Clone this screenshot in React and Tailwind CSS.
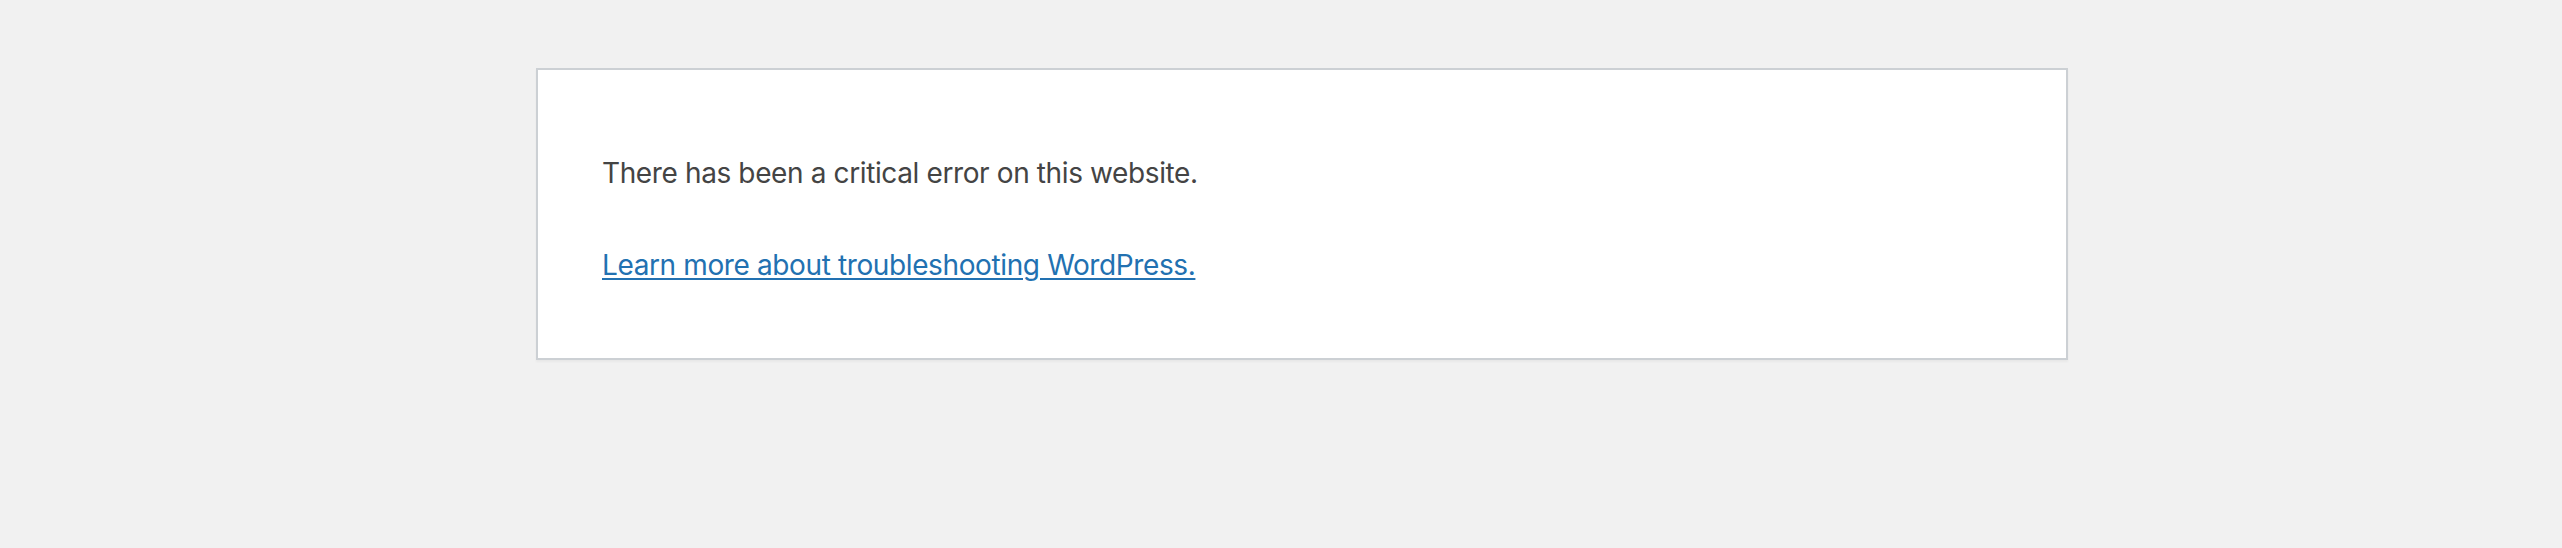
export default function App() {
  return (
    <div className="min-h-[548px] w-full bg-[#f1f1f1] pt-[68px] pb-[20px]" style={{ fontFamily: 'Inter, "Noto Sans", sans-serif' }}>
      <div className="ml-[536px] w-[1532px] border-2 border-[#ccd0d4] bg-white px-[64px] py-[32px] text-[#444] shadow-[0_2px_2px_rgba(0,0,0,0.04)]">
        <p className="mt-[50px] mb-[40px] text-[28px] leading-[42px] tracking-[-0.38px]">There has been a critical error on this website.</p>
        <p className="mt-[50px] mb-[40px] text-[28px] leading-[42px] tracking-[-0.38px]">
          <a href="#" className="text-[#2271b1] underline underline-offset-[3px] decoration-[2px]">Learn more about troubleshooting WordPress.</a>
        </p>
      </div>
    </div>
  );
}
